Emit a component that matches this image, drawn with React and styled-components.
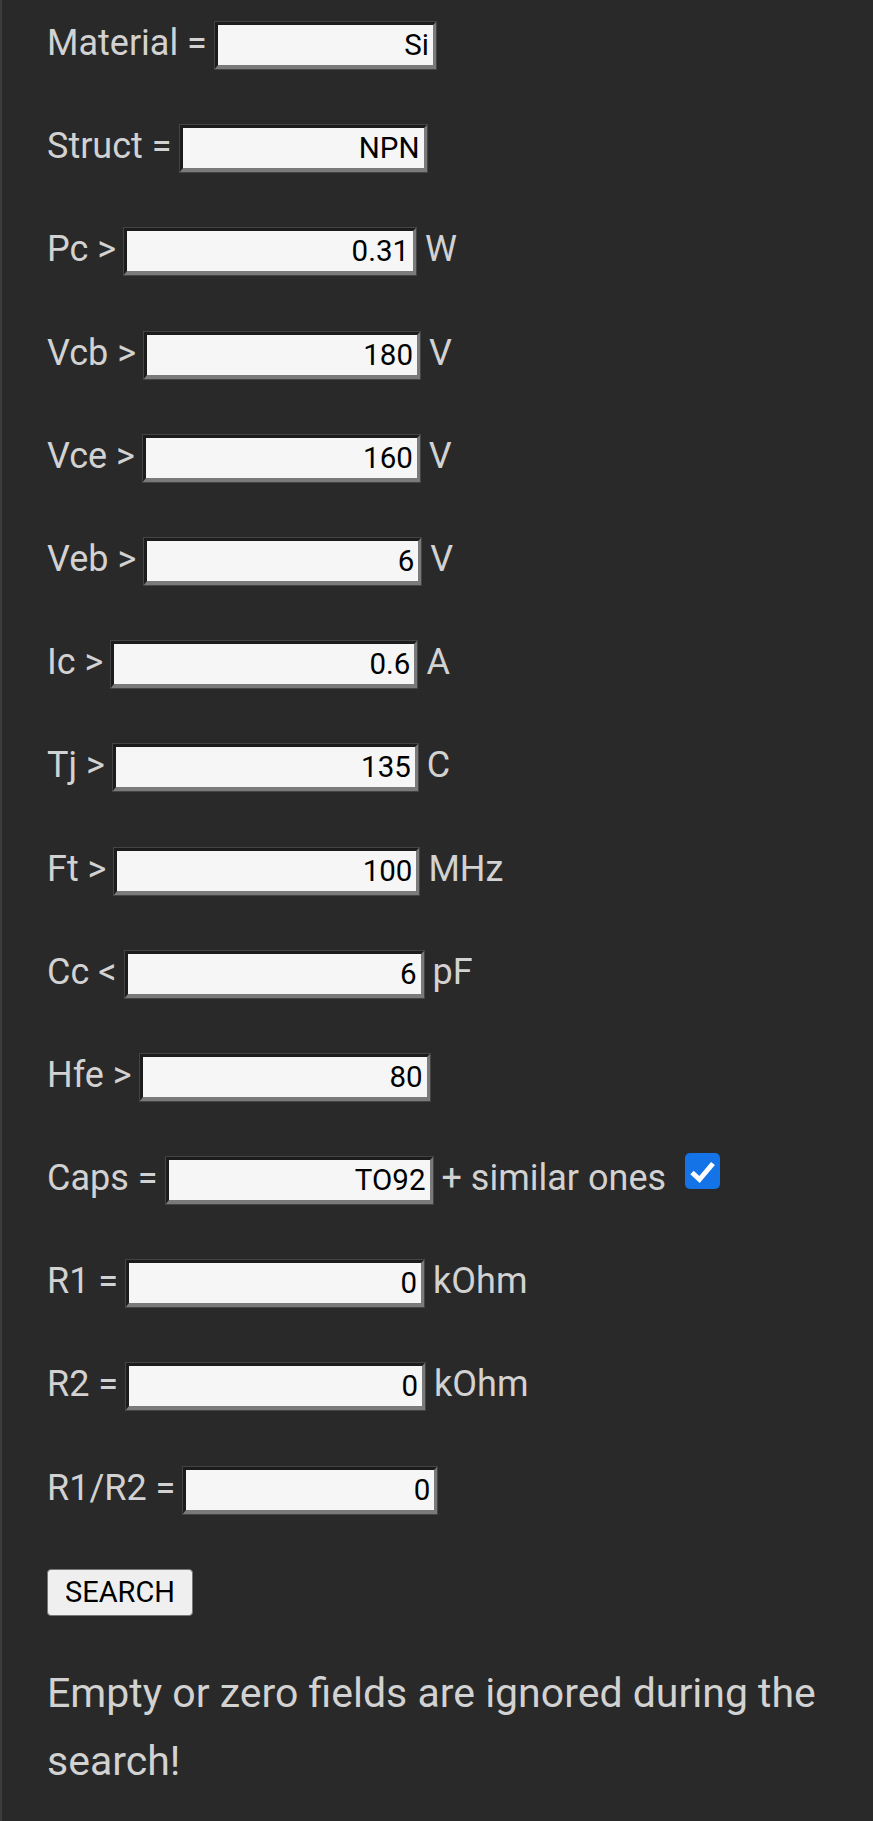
import React from "react";
import styled, { createGlobalStyle } from "styled-components";

const GlobalStyle = createGlobalStyle`
  html, body {
    margin: 0;
    padding: 0;
    background: #292929;
  }
  body {
    font-family: Roboto, "Noto Sans", "Liberation Sans", sans-serif;
  }
`;

const Page = styled.main`
  min-height: 1821px;
  box-sizing: border-box;
  border-left: 2px solid #3c3c3c;
  padding: 21px 20px 0 45px;
  background: #292929;
  color: #d2d2d2;
`;

const Form = styled.form`
  display: flex;
  flex-direction: column;
  gap: 54.2px;
  margin: 0;
`;

const Row = styled.div`
  display: flex;
  align-items: baseline;
  height: 49px;
`;

const Label = styled.label`
  flex-shrink: 0;
  font-size: 36px;
  line-height: normal;
  color: #d2d2d2;
  margin-right: 7px;
  white-space: nowrap;
`;

const Unit = styled.span`
  flex-shrink: 0;
  font-size: 36px;
  line-height: normal;
  color: #d2d2d2;
  margin-left: 8px;
  white-space: nowrap;
`;

const Field = styled.input`
  flex-shrink: 0;
  box-sizing: border-box;
  width: ${(p) => p.$w}px;
  height: 49px;
  margin: 0;
  padding: 0 4px 0 4px;
  border-style: solid;
  border-width: 4px 4px 5px 4px;
  border-color: #1c1c1c #7a7a7a #7a7a7a #1c1c1c;
  outline: 1px solid #444;
  outline-offset: -1px;
  background: #f6f6f6;
  color: #000;
  font-family: Roboto, "Noto Sans", sans-serif;
  font-size: 29.5px;
  text-align: right;
`;

const Check = styled.span`
  flex-shrink: 0;
  align-self: flex-start;
  margin-top: -3px;
  margin-left: 19px;
  width: 35px;
  min-width: 35px;
  height: 36px;
  border-radius: 5px;
  background: #1473e6;
  display: flex;
  align-items: center;
  justify-content: center;
`;

const Actions = styled.div`
  display: flex;
  height: 47px;
`;

const Button = styled.button`
  box-sizing: border-box;
  height: 47px;
  padding: 0 17px;
  margin: 0;
  border: 1px solid #767676;
  border-radius: 4px;
  background: #efefef;
  color: #000;
  font-family: Roboto, "Noto Sans", sans-serif;
  font-size: 29px;
`;

const Note = styled.p`
  margin: 43px 0 0 0;
  font-size: 41px;
  line-height: 68px;
  color: #d2d2d2;
`;

const rows = [
  { label: "Material =", value: "Si", w: 223 },
  { label: "Struct =", value: "NPN", w: 249 },
  { label: "Pc >", value: "0.31", w: 294, unit: "W" },
  { label: "Vcb >", value: "180", w: 278, unit: "V" },
  { label: "Vce >", value: "160", w: 279, unit: "V" },
  { label: "Veb >", value: "6", w: 279, unit: "V" },
  { label: "Ic >", value: "0.6", w: 308, unit: "A" },
  { label: "Tj >", value: "135", w: 307, unit: "C" },
  { label: "Ft >", value: "100", w: 307, unit: "MHz" },
  { label: "Cc <", value: "6", w: 301, unit: "pF" },
  { label: "Hfe >", value: "80", w: 292 },
  { label: "Caps =", value: "TO92", w: 269, unit: "+ similar ones", check: true },
  { label: "R1 =", value: "0", w: 300, unit: "kOhm" },
  { label: "R2 =", value: "0", w: 301, unit: "kOhm" },
  { label: "R1/R2 =", value: "0", w: 256 },
];

export default function App() {
  return (
    <>
      <GlobalStyle />
      <Page>
        <Form onSubmit={(e) => e.preventDefault()}>
          {rows.map((r) => (
            <Row key={r.label}>
              <Label>{r.label}</Label>
              <Field $w={r.w} defaultValue={r.value} />
              {r.unit && <Unit>{r.unit}</Unit>}
              {r.check && (
                <Check>
                  <svg width="35" height="35" viewBox="0 0 35 35">
                    <path
                      d="M7 18.5 L14.5 25.5 L28 9.5"
                      fill="none"
                      stroke="#fff"
                      strokeWidth="5"
                    />
                  </svg>
                </Check>
              )}
            </Row>
          ))}
          <Actions>
            <Button type="submit">SEARCH</Button>
          </Actions>
        </Form>
        <Note>Empty or zero fields are ignored during the search!</Note>
      </Page>
    </>
  );
}
